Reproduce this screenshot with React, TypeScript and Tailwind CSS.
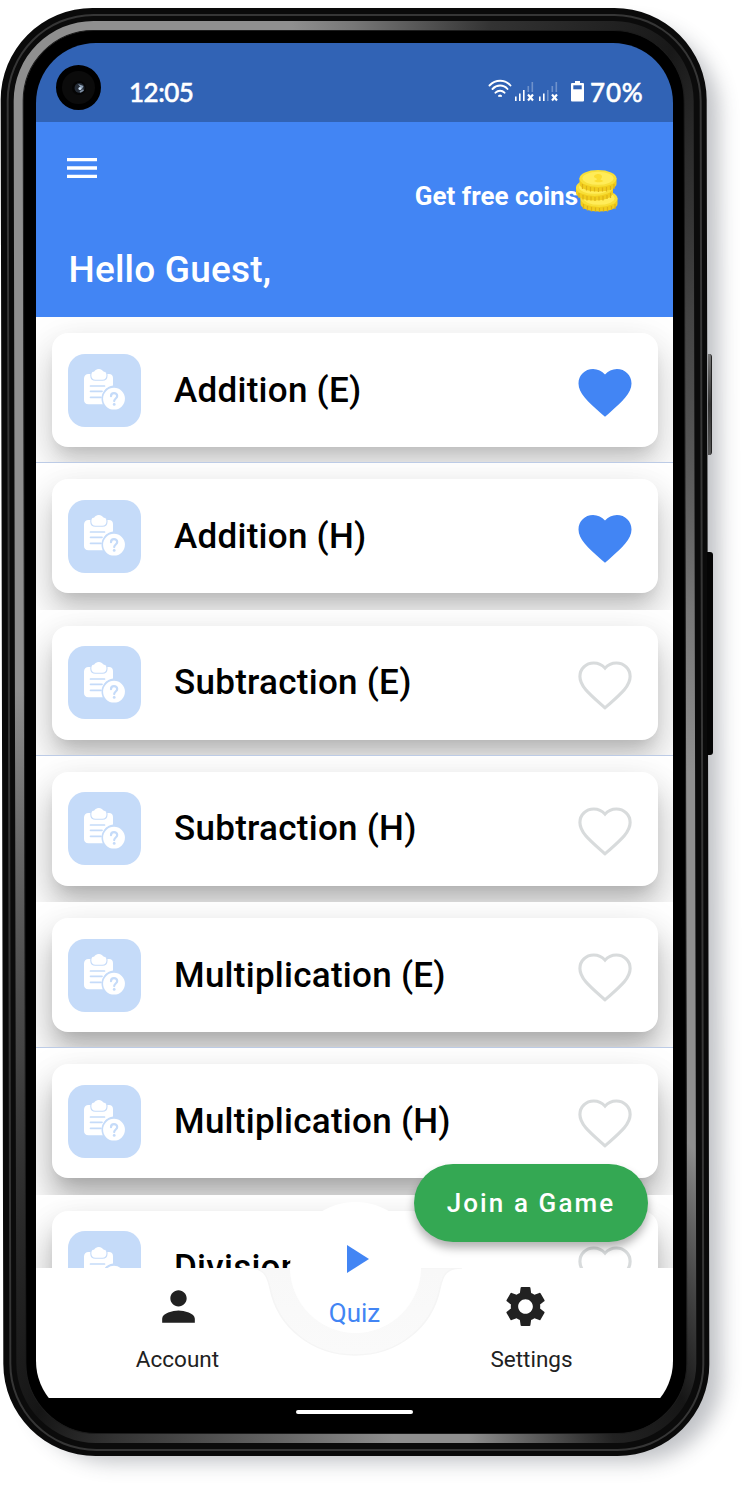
import React from "react";
import { MdPerson, MdSettings } from "react-icons/md";

const HEART =
  "M12 21.35l-1.45-1.32C5.4 15.36 2 12.28 2 8.5 2 5.42 4.42 3 7.5 3c1.74 0 3.41.81 4.5 2.09C13.09 3.81 14.76 3 16.5 3 19.58 3 22 5.42 22 8.5c0 3.78-3.4 6.86-8.55 11.54L12 21.35z";

type Quiz = { title: string; liked: boolean; line: boolean; shadow: string };

const quizzes: Quiz[] = [
  { title: "Addition (E)", liked: true, line: true, shadow: "shadow-[0_10px_14px_-6px_rgba(0,0,0,0.12),0_22px_34px_3px_rgba(0,0,0,0.12),0_10px_38px_5px_rgba(0,0,0,0.08)]" },
  { title: "Addition (H)", liked: true, line: false, shadow: "shadow-[0_10px_14px_-6px_rgba(0,0,0,0.12),0_22px_34px_3px_rgba(0,0,0,0.14),0_10px_38px_5px_rgba(0,0,0,0.08)]" },
  { title: "Subtraction (E)", liked: false, line: true, shadow: "shadow-[0_10px_14px_-6px_rgba(0,0,0,0.12),0_22px_34px_3px_rgba(0,0,0,0.16),0_10px_38px_5px_rgba(0,0,0,0.08)]" },
  { title: "Subtraction (H)", liked: false, line: false, shadow: "shadow-[0_10px_14px_-6px_rgba(0,0,0,0.12),0_23px_34px_3px_rgba(0,0,0,0.18),0_10px_38px_5px_rgba(0,0,0,0.08)]" },
  { title: "Multiplication (E)", liked: false, line: true, shadow: "shadow-[0_10px_14px_-6px_rgba(0,0,0,0.12),0_24px_34px_3px_rgba(0,0,0,0.20),0_11px_38px_5px_rgba(0,0,0,0.08)]" },
  { title: "Multiplication (H)", liked: false, line: false, shadow: "shadow-[0_10px_14px_-6px_rgba(0,0,0,0.12),0_25px_34px_3px_rgba(0,0,0,0.22),0_12px_38px_5px_rgba(0,0,0,0.08)]" },
  { title: "Division (E)", liked: false, line: false, shadow: "shadow-[0_10px_14px_-6px_rgba(0,0,0,0.12),0_25px_34px_3px_rgba(0,0,0,0.22),0_12px_38px_5px_rgba(0,0,0,0.08)]" },
];

function Heart({ liked }: { liked: boolean }) {
  return (
    <svg width="54" height="50" viewBox="0 0 54 50" className="shrink-0">
      {liked ? (
        <path d={HEART} fill="#4285f4" transform="translate(-4.8 -6.7) scale(2.65 2.6)" />
      ) : (
        <path d={HEART} fill="none" stroke="#d8dbdc" strokeWidth="1.25" transform="translate(-3.1 -5.3) scale(2.51 2.44)" />
      )}
    </svg>
  );
}

function ClipboardIcon() {
  return (
    <svg width="42" height="42" viewBox="0 0 42 42">
      <path
        d="M4.500 5H25c2.500 0 4 1.600 4 4v7.500c-6 .8-10.600 5.500-10.600 11.800 0 2.500.5 4.700 1.600 7H4.500C1.500 35.300 0 33.500 0 31V9.500C0 6.800 1.800 5 4.500 5z"
        fill="#fff"
      />
      <path
        d="M6.800 6C6.800 3.500 8 2.300 10.500 2c1-1.400 2.300-2.100 4.300-2.100S18 .6 19.200 2c2.500.3 3.800 1.500 3.800 4v.5c0 2.700-1.800 4.700-4.600 4.700h-7C8.500 11.200 6.800 9.200 6.800 6.500z"
        fill="#fff"
        stroke="#c5dbf9"
        strokeWidth="1.100"
      />
      <path d="M8 4.500C8 3.400 9 2.700 10.300 2.700 11.200 1 12.800 0 14.800 0s3.600 1 4.500 2.700c1.500 0 2.500.7 2.500 1.800h-.5L15 8 8.500 4.500z" fill="#fff" />
      <path d="M6.500 17h14M6.500 22.300h11.500M6.500 28.300h10.500" stroke="#c5dbf9" strokeWidth="1.700" strokeLinecap="round" />
      <circle cx="30" cy="29.700" r="12.500" fill="#c5dbf9" />
      <circle cx="30" cy="29.700" r="10.900" fill="#fff" />
      <path d="M27 27.200c0-2 1.300-3.100 3-3.100s3.200 1.200 3.200 2.900c0 2.500-3 2.500-3 5.100" fill="none" stroke="#c5dbf9" strokeWidth="2.200" strokeLinecap="round" />
      <circle cx="30.200" cy="35.400" r="1.400" fill="#c5dbf9" />
    </svg>
  );
}

function Coin({ x, y }: { x: number; y: number }) {
  return (
    <g transform={`translate(${x} ${y})`}>
      <path d="M0 8v6c0 4 8 7.500 18.500 7.500S37 18 37 14V8z" fill="#f1cd1c" />
      <path d="M3 14v5M7 16v4.500M11 17v4.500M15 17.500v4M19 18v4M23 17.500v4M27 17v4.500M31 16v4M34.500 14v5" stroke="#dcb118" strokeWidth="1.200" />
      <ellipse cx="18.500" cy="8.500" rx="18.500" ry="8.500" fill="#f8df38" />
      <ellipse cx="18.500" cy="8.300" rx="15.500" ry="6.500" fill="#ffec59" />
    </g>
  );
}

function CoinsIcon() {
  return (
    <svg width="42" height="42" viewBox="0 0 42 42" className="-ml-[2px] shrink-0">
      <Coin x={4.5} y={20} />
      <Coin x={0} y={9} />
      <Coin x={3.5} y={0} />
      <path d="M20 4.500c3-1 6 0 6 2s-1.500 2-1.500 3l3 1.500c-3 1.800-7 1.800-9.500 0l3-1.500c0-1.500-3-1.500-3-3 0-1 1-1.700 2-2z" fill="#fbdd30" />
    </svg>
  );
}

function Signal({ bars }: { bars: number }) {
  return (
    <svg width="20" height="21" viewBox="0 0 20 21">
      <g fill="#fff">
        <rect x="0" y="15.500" width="1.600" height="4.500" />
        <rect x="4" y="12.500" width="1.600" height="7.500" />
        <rect x="8" y="9" width="1.600" height="11" opacity={bars > 2 ? 1 : 0.3} />
        <rect x="12.500" y="5" width="1.600" height="6" opacity=".3" />
        <rect x="16.500" y="1" width="1.600" height="10" opacity=".3" />
      </g>
      <path d="M13 13.500l5 6M18 13.500l-5 6" stroke="#fff" strokeWidth="2.100" />
    </svg>
  );
}

function StatusBar() {
  return (
    <div className="flex h-[79px] shrink-0 items-start bg-[#3163b5] font-['Lato'] text-[26px] leading-[30px] text-white">
      <div className="mt-[22px] ml-[20px] flex size-[45px] items-center justify-center rounded-full border-[6px] border-black bg-[#0b0b0b]">
        <svg width="16" height="16" viewBox="0 0 16 16">
          <circle cx="8" cy="8" r="7" fill="#050505" />
          <circle cx="8.500" cy="8" r="5" fill="#252c36" />
          <path d="M7 4l5.500 2-1.500 3z" fill="#8da0b6" />
          <circle cx="9" cy="8.500" r="1.600" fill="#c9dcf0" />
          <path d="M9 12l3.500-2" stroke="#7e8fa3" strokeWidth="1.500" />
        </svg>
      </div>
      <span className="mt-[34px] ml-[28px] w-[359px] font-medium tracking-[-0.5px] [-webkit-text-stroke:0.5px_white]">12:05</span>
      <svg width="24" height="20" viewBox="0 0 24 20" className="mt-[36px]" fill="none" stroke="#fff" strokeWidth="1.900" strokeLinecap="round">
        <path d="M1.500 6.500C7.500.2 17 .2 22.500 6.500M4.500 10c4.200-4.600 11-4.600 15 0M7.500 13.700c2.600-2.700 6.500-2.700 9 0M11 17c.6-.5 1.500-.5 2 0" />
      </svg>
      <div className="mt-[38px] ml-[3px] flex gap-1">
        <Signal bars={3} />
        <Signal bars={2} />
      </div>
      <svg width="13" height="21" viewBox="0 0 13 21" className="mt-[38px] ml-[12px]">
        <path d="M4 0h5v2h3a1 1 0 011 1v16.500a1 1 0 01-1 1H1a1 1 0 01-1-1V3a1 1 0 011-1h3z" fill="#fff" />
        <rect x="2.300" y="4.300" width="8.400" height="4" fill="#3163b5" />
      </svg>
      <span className="mt-[34px] ml-[6px] font-medium tracking-[0.8px] [-webkit-text-stroke:0.5px_white]">70%</span>
    </div>
  );
}

function QuizRow({ quiz }: { quiz: Quiz }) {
  return (
    <div className={`relative h-[146.25px] shrink-0 overflow-hidden bg-white pt-[16.200px] pr-[15.500px] pl-[16.250px] ${quiz.line ? "border-b border-[#bccbe6]" : ""}`}>
      <div className={`flex h-[114px] items-center rounded-2xl bg-white pr-[25.500px] pl-4 ${quiz.shadow}`}>
        <div className="flex size-[73px] shrink-0 items-center justify-center rounded-[17px] bg-[#c5dbf9]">
          <ClipboardIcon />
        </div>
        <span className="mt-px ml-[32.750px] grow text-[35px] leading-10 font-medium tracking-[0.27px] text-black">{quiz.title}</span>
        <div className="mt-[6px] flex">
          <Heart liked={quiz.liked} />
        </div>
      </div>
    </div>
  );
}

function NavBar() {
  return (
    <nav className="relative flex h-[130px] shrink-0 bg-white text-[22.5px] leading-7 text-[#212121]">
      <svg width="220" height="88" viewBox="0 0 220 88" className="absolute top-0 left-[209px]">
        <defs>
          <linearGradient id="notch" x1="0" y1="0" x2="0" y2="1">
            <stop offset="0" stopColor="#f8f8f8" />
            <stop offset="1" stopColor="#fafafa" />
          </linearGradient>
        </defs>
        <path d="M3 0C18 0 22 6 25 20C33 60 68 87 110 87S187 60 195 20C198 6 202 0 217 0z" fill="url(#notch)" stroke="#f5f5f5" strokeWidth="1.500" />
      </svg>
      <div className="flex w-[283px] flex-col items-center pt-[14px]">
        <MdPerson size={49} className="ml-[2px]" />
        <span className="mt-[14px]">Account</span>
      </div>
      <div className="absolute -top-[66px] left-[254px] flex size-[131px] flex-col items-center rounded-full bg-white text-[#4285f4]">
        <svg width="22" height="28" viewBox="0 0 22 28" className="mt-[43px] ml-[5px]">
          <path d="M0 0l22 14L0 28z" fill="currentColor" />
        </svg>
        <span className="mt-[24px] -ml-[2px] text-[26px] leading-8">Quiz</span>
      </div>
      <div className="ml-auto flex w-[283px] flex-col items-center pt-[14px]">
        <MdSettings size={49} className="mr-[12px]" />
        <span className="mt-[14px]">Settings</span>
      </div>
    </nav>
  );
}

function Frame() {
  return (
    <div className="mt-[8px] ml-[2px] flex h-[1448px] w-[706px] skew-x-[0.12deg] rounded-[92px] bg-[#0a0a0a] p-[5.500px] shadow-[18px_12px_20px_-6px_rgba(60,66,78,0.32)] [grid-area:1/1]">
      <div className="flex grow rounded-[87px] bg-[#363636] p-[2px]">
        <div className="flex grow rounded-[85px] bg-[#0b0b0b] p-[5.500px]">
          <div className="flex grow rounded-[80px] bg-[conic-gradient(#777_0deg,#333_11deg,#181818_25deg,#2c2c2c_30deg,#444_39deg,#777_70deg,#8f8f8f_97deg,#8f8f8f_141deg,#444_149deg,#161616_154deg,#222_160deg,#8f8f8f_171deg,#8f8f8f_177deg,#666_186deg,#333_199deg,#151515_205deg,#222_211deg,#444_226deg,#666_250deg,#8f8f8f_277deg,#8f8f8f_355deg,#777_360deg)] p-[9px]">
            <div className="grow rounded-[71px] border border-[#1c1c1c] bg-black" />
          </div>
        </div>
      </div>
    </div>
  );
}

export default function App() {
  return (
    <div className="relative grid h-[1485px] w-[748px] overflow-hidden bg-white font-['Roboto',sans-serif]">
      <Frame />
      <div className="absolute top-[354px] left-[708px] h-[101px] w-[4px] rounded-r-[3px] border-r border-[#222] bg-gradient-to-b from-[#777] via-[#333] to-[#555]" />
      <div className="absolute top-[552px] left-[707px] h-[203px] w-[6px] rounded-r-[3px] bg-[#050505]" />
      <div className="relative mt-[43px] ml-[36px] flex h-[1378px] w-[637px] flex-col overflow-hidden rounded-[60px] bg-black [grid-area:1/1]">
        <StatusBar />
        <header className="flex h-[195px] shrink-0 flex-col bg-[#4285f4] text-white">
          <div className="flex items-start justify-between pr-[55px] pl-[30.500px]">
            <svg width="30" height="20" viewBox="0 0 30 20" className="mt-[36px]" fill="#fff">
              <path d="M0 0h30v3.300H0zM0 8.350h30v3.300H0zM0 16.700h30V20H0z" />
            </svg>
            <div className="mt-[48px] flex items-center">
              <span className="mt-[9px] text-[26px] leading-8 font-bold">Get free coins</span>
              <CoinsIcon />
            </div>
          </div>
          <h1 className="mt-[36px] ml-[32.500px] text-[37px] leading-[44px] font-medium tracking-[0.2px]">Hello Guest,</h1>
        </header>
        <main className="flex h-[951px] shrink-0 flex-col overflow-hidden bg-white">
          {quizzes.map((q) => (
            <QuizRow key={q.title} quiz={q} />
          ))}
        </main>
        <NavBar />
        <div className="flex grow justify-center bg-black">
          <div className="mt-[12px] h-[4px] w-[117px] rounded-full bg-white" />
        </div>
        <button className="absolute top-[1121px] left-[378px] h-[78px] w-[234px] rounded-full bg-[#34a853] text-[26px] font-medium tracking-[2.100px] text-white shadow-[0_6px_10px_rgba(0,0,0,0.3)]">
          Join a Game
        </button>
      </div>
    </div>
  );
}
